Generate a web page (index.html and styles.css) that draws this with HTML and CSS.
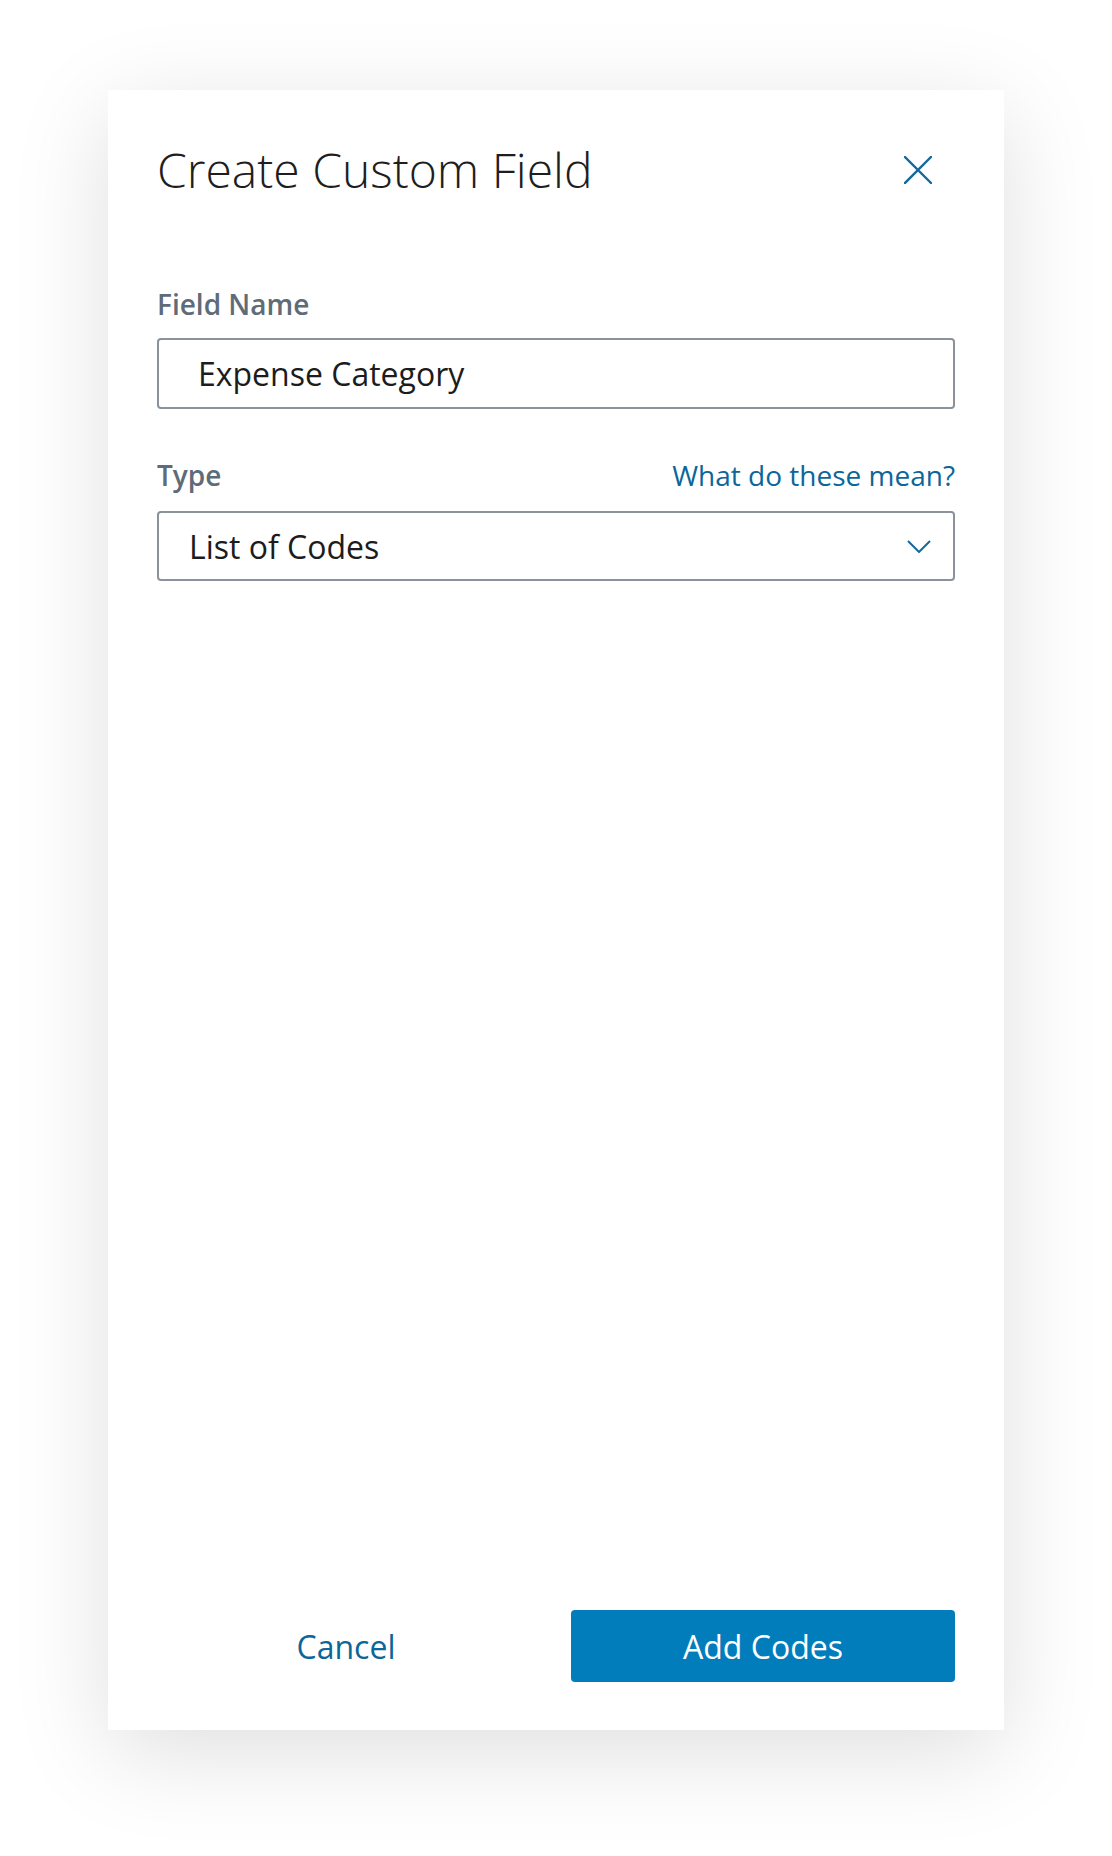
FILE: index.html
```html
<!DOCTYPE html>
<html lang="en">
<head>
<meta charset="utf-8">
<title>Create Custom Field</title>
<link rel="stylesheet" href="styles.css">
</head>
<body>
<div class="page">
  <div class="card">
    <div class="header">
      <h1 class="title">Create Custom Field</h1>
      <svg class="close" width="28" height="28" viewBox="0 0 28 28" aria-label="Close">
        <path d="M1 1 L27 27 M27 1 L1 27" fill="none" stroke="#13699c" stroke-width="2.4" stroke-linecap="square"/>
      </svg>
    </div>

    <div class="field field-name">
      <div class="label-row">
        <span class="label">Field Name</span>
      </div>
      <div class="input">Expense Category</div>
    </div>

    <div class="field field-type">
      <div class="label-row">
        <span class="label">Type</span>
        <a class="link" href="#">What do these mean?</a>
      </div>
      <div class="select">
        <span>List of Codes</span>
        <svg class="chevron" width="24" height="13" viewBox="0 0 24 13">
          <path d="M1 1 L12 12 L23 1" fill="none" stroke="#13699c" stroke-width="2"/>
        </svg>
      </div>
    </div>

    <div class="footer">
      <a class="cancel" href="#">Cancel</a>
      <button class="primary" type="button">Add Codes</button>
    </div>
  </div>
</div>
</body>
</html>
```

FILE: styles.css
```css
* { box-sizing: border-box; }

html, body {
  margin: 0;
  padding: 0;
  background: #ffffff;
}

body {
  font-family: "Open Sans", "Noto Sans", "Liberation Sans", sans-serif;
  color: #1f1f1f;
}

.page {
  padding: 90px 108px 126px;
}

.card {
  width: 896px;
  height: 1640px;
  background: #ffffff;
  box-shadow: 0 22px 90px rgba(0, 0, 0, 0.13);
  padding: 52px 49px 48px 49px;
  display: flex;
  flex-direction: column;
}

.header {
  display: flex;
  align-items: center;
  justify-content: space-between;
}

.title {
  margin: 0;
  font-size: 48px;
  line-height: 56px;
  font-weight: 300;
  color: #1e1e1e;
}

.close {
  display: block;
  margin-right: 23px;
}

.field-name {
  margin-top: 90px;
}

.field-name .label-row {
  margin-bottom: 18px;
}

.field-type {
  margin-top: 50px;
}

.label-row {
  display: flex;
  justify-content: space-between;
  align-items: baseline;
  margin-bottom: 20px;
}

.label {
  font-size: 28px;
  line-height: 32px;
  font-weight: 600;
  color: #5e6b78;
}

.link {
  font-size: 28px;
  line-height: 32px;
  font-weight: 400;
  color: #0b6699;
  text-decoration: none;
}

.input,
.select {
  border: 2px solid #8a939c;
  border-radius: 4px;
  font-size: 32px;
  color: #1c1c1c;
  display: flex;
  align-items: center;
}

.input {
  height: 71px;
  padding-left: 39px;
}

.select {
  height: 70px;
  padding-left: 30px;
  padding-right: 22px;
  justify-content: space-between;
}

.chevron {
  display: block;
}

.footer {
  margin-top: auto;
  display: flex;
  align-items: center;
  gap: 36px;
}

.cancel {
  flex: 1;
  text-align: center;
  font-size: 32px;
  color: #0b6699;
  text-decoration: none;
}

.primary {
  width: 384px;
  height: 72px;
  border: none;
  border-radius: 4px;
  background: #027dbc;
  color: #ffffff;
  font-family: "Open Sans", "Noto Sans", "Liberation Sans", sans-serif;
  font-size: 32px;
  font-weight: 400;
  padding: 0;
}
```
